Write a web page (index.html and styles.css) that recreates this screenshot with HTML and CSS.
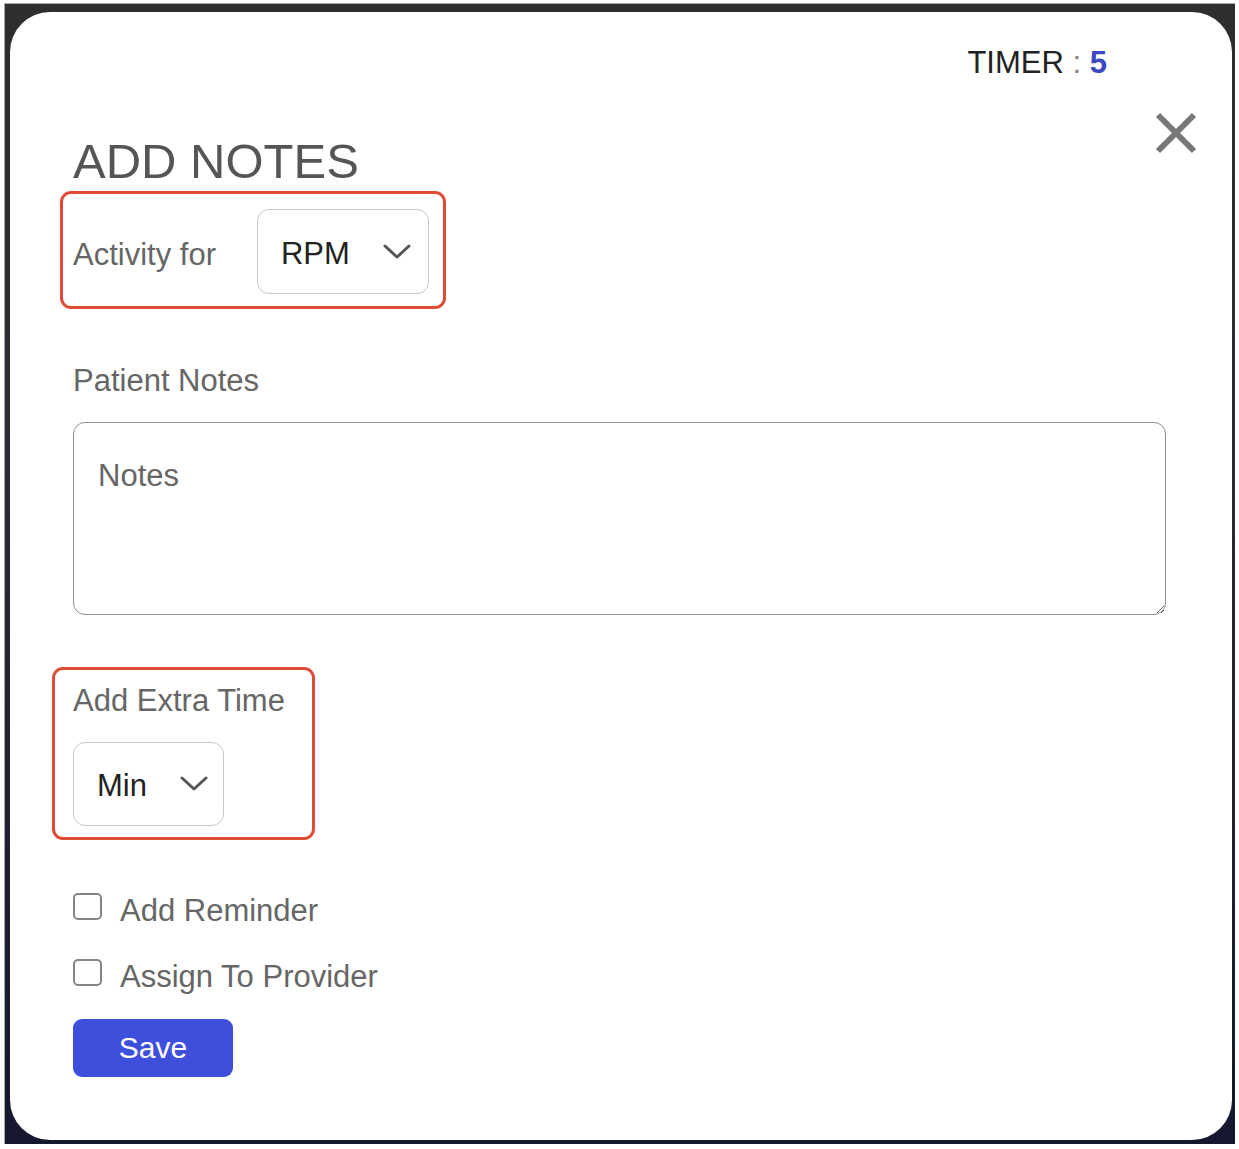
FILE: index.html
```html
<!DOCTYPE html>
<html lang="en">
<head>
<meta charset="utf-8">
<title>Add Notes</title>
<link rel="stylesheet" href="styles.css">
</head>
<body>
<div class="frame">
  <div class="modal">
    <div class="timer">TIMER <span class="colon">:</span> <span class="timer-value">5</span></div>
    <button class="close" aria-label="Close">
      <svg width="42" height="42" viewBox="0 0 42 42"><path d="M3 3 L39 39 M39 3 L3 39" stroke="#787878" stroke-width="6" stroke-linecap="butt" fill="none"/></svg>
    </button>
    <h1 class="title">ADD NOTES</h1>

    <div class="highlight activity">
      <span class="label">Activity for</span>
      <div class="select select-rpm">
        <span class="select-text">RPM</span>
        <svg class="chev" width="28" height="16" viewBox="0 0 28 16"><path d="M2 2 L14 13 L26 2" stroke="#555" stroke-width="3" fill="none" stroke-linejoin="round" stroke-linecap="round"/></svg>
      </div>
    </div>

    <div class="label notes-label">Patient Notes</div>
    <textarea class="notes" placeholder="Notes"></textarea>

    <div class="highlight extra">
      <div class="label">Add Extra Time</div>
      <div class="select select-min">
        <span class="select-text">Min</span>
        <svg class="chev" width="28" height="16" viewBox="0 0 28 16"><path d="M2 2 L14 13 L26 2" stroke="#555" stroke-width="3" fill="none" stroke-linejoin="round" stroke-linecap="round"/></svg>
      </div>
    </div>

    <label class="check-row first"><input type="checkbox" class="check"><span>Add Reminder</span></label>
    <label class="check-row"><input type="checkbox" class="check"><span>Assign To Provider</span></label>

    <button class="save">Save</button>
  </div>
</div>
</body>
</html>
```

FILE: styles.css
```css
* { box-sizing: border-box; }

html, body {
  margin: 0;
  padding: 0;
  background: #ffffff;
}

body {
  font-family: "Liberation Sans", Arial, sans-serif;
  padding: 3px 4px 5px 4px;
}

.frame {
  border-top: 1px solid #a9a9a9;
  border-left: 1px solid #a9a9a9;
  background: linear-gradient(#2e2e2e 0%, #2b2b33 40%, #14172e 100%);
  padding: 8px 3px 3px 5px;
  height: 1141px;
}

.modal {
  position: relative;
  background: #ffffff;
  border-radius: 40px;
  height: 1128px;
  padding: 33px 0 0 63px;
}

.timer {
  text-align: right;
  padding-right: 125px;
  font-size: 31px;
  line-height: 36px;
  color: #222;
}

.colon { color: #888; }

.timer-value {
  color: #3b48c6;
  font-weight: bold;
}

.close {
  position: absolute;
  top: 100px;
  right: 35px;
  width: 42px;
  height: 42px;
  padding: 0;
  border: 0;
  background: none;
  display: block;
}

.close svg { display: block; }

.title {
  margin: 52px 0 0 0;
  font-size: 49px;
  line-height: 56px;
  font-weight: normal;
  color: #555;
}

.label {
  font-size: 31px;
  line-height: 36px;
  color: #666;
}

.highlight {
  border: 3px solid #e04b35;
  border-radius: 11px;
}

.activity {
  display: flex;
  align-items: center;
  width: 386px;
  height: 118px;
  margin: 2px 0 0 -13px;
  padding: 0 14px 0 10px;
  gap: 41px;
}

.activity .label {
  margin-top: 10px;
}

.select {
  display: flex;
  align-items: center;
  justify-content: space-between;
  border: 1.5px solid #c8c8c8;
  border-radius: 12px;
  font-size: 31px;
  line-height: 36px;
  color: #222;
}

.select-text {
  position: relative;
  top: 2px;
}

.select-rpm {
  width: 172px;
  height: 85px;
  padding: 0 17px 0 23px;
  margin-top: 3px;
}

.select-min {
  width: 151px;
  height: 84px;
  padding: 0 15px 0 23px;
  margin-top: 23px;
}

.chev { display: block; }

.notes-label {
  margin-top: 54px;
}

.notes {
  display: block;
  margin-top: 23px;
  width: 1093px;
  height: 193px;
  border: 1.5px solid #8f8f8f;
  border-radius: 12px;
  padding: 35px 24px 20px 24px;
  font-family: "Liberation Sans", Arial, sans-serif;
  font-size: 31px;
  line-height: 36px;
  color: #222;
  resize: vertical;
  outline: none;
}

.notes::placeholder { color: #666; }

.extra {
  width: 263px;
  height: 173px;
  margin: 52px 0 0 -21px;
  padding: 13px 10px 0 18px;
}

.check-row {
  display: flex;
  align-items: center;
  gap: 18px;
  font-size: 31px;
  line-height: 36px;
  color: #666;
  margin-top: 30px;
  width: max-content;
}

.check-row.first { margin-top: 53px; }

.check {
  appearance: none;
  -webkit-appearance: none;
  margin: 0;
  width: 29px;
  height: 27px;
  border: 2px solid #858585;
  border-radius: 5px;
  background: #fff;
  position: relative;
  top: -5px;
}

.save {
  display: block;
  margin-top: 24px;
  width: 160px;
  height: 58px;
  border: 0;
  border-radius: 9px;
  background: #3d4fdb;
  color: #fff;
  font-family: "Liberation Sans", Arial, sans-serif;
  font-size: 30px;
  padding: 0 0 0 0;
}
```
